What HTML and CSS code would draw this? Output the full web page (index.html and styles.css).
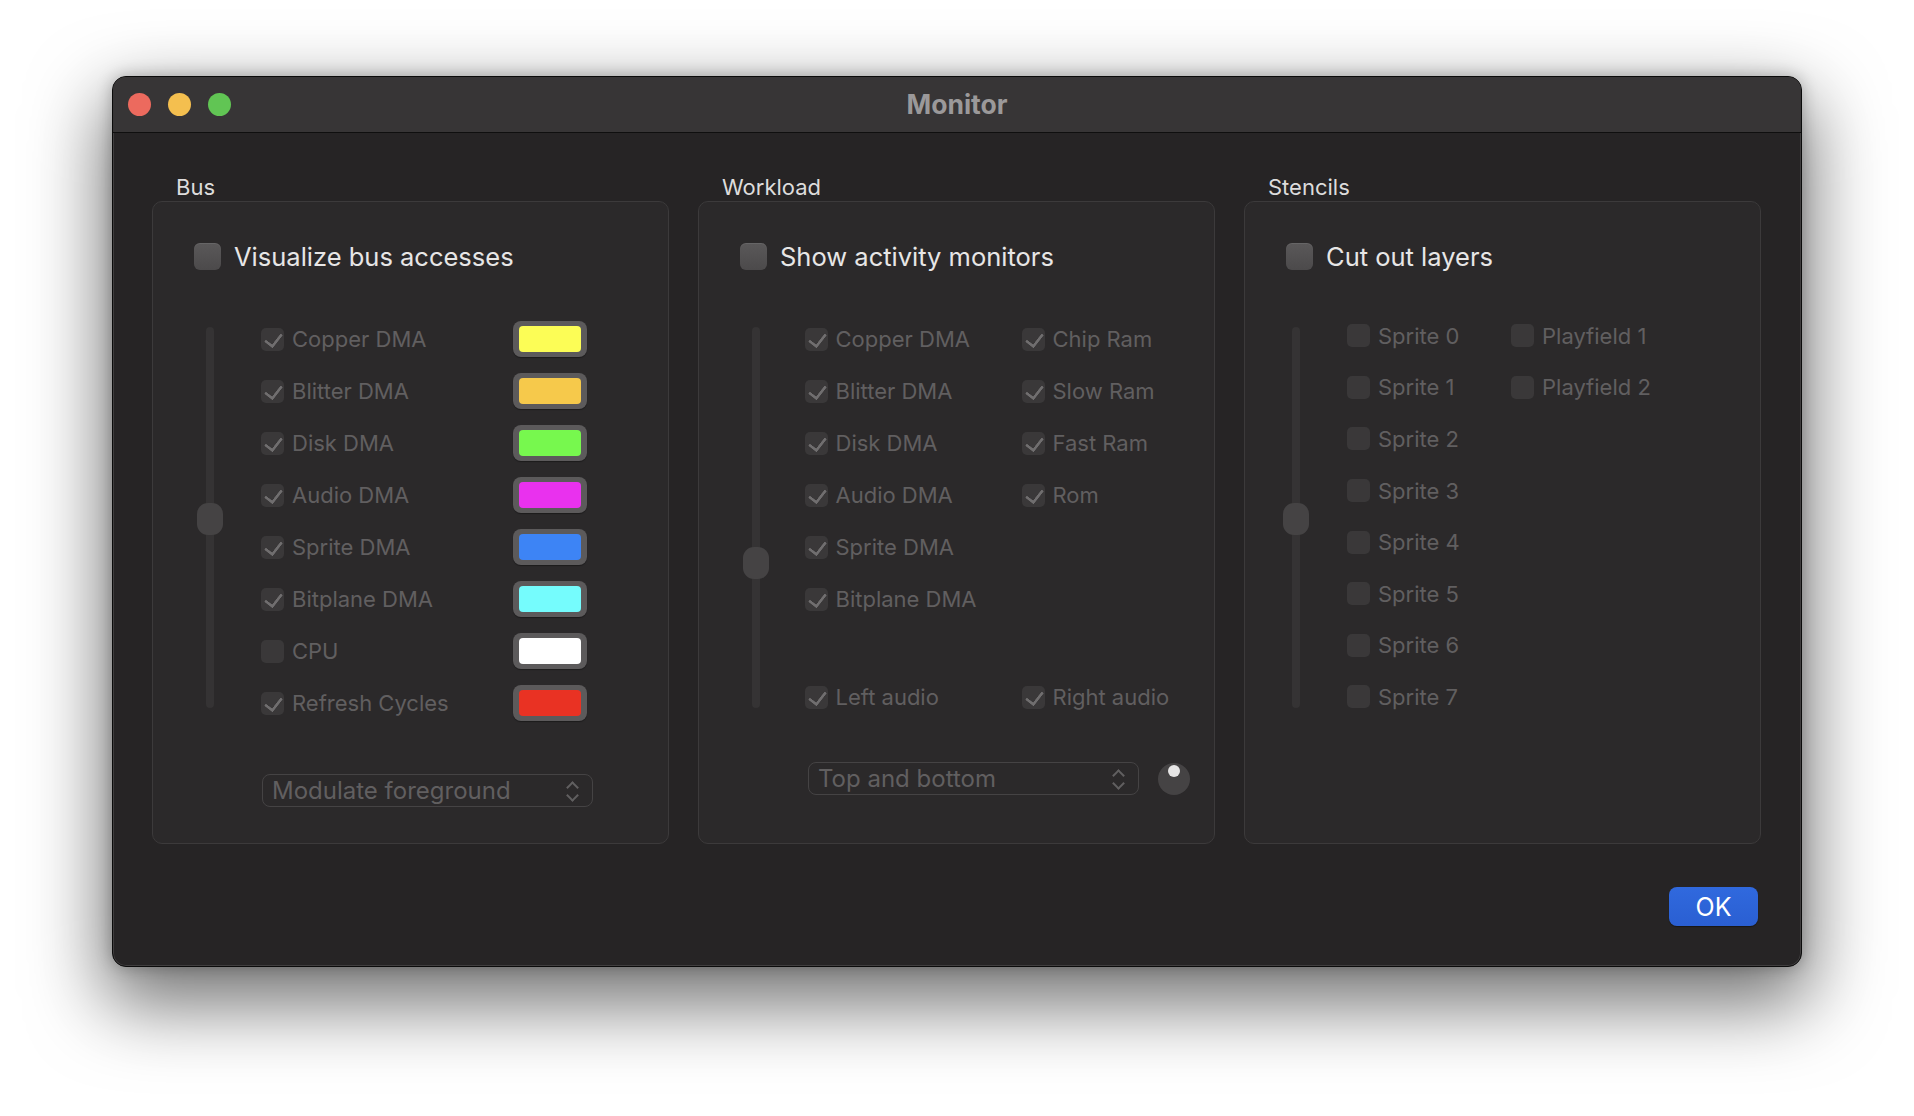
FILE: index.html
```html
<!DOCTYPE html>
<html>
<head>
<meta charset="utf-8">
<link rel="stylesheet" href="styles.css">
</head>
<body>
<div class="window">
  <div class="titlebar">
    <div class="lights">
      <span class="light red"></span>
      <span class="light yellow"></span>
      <span class="light green"></span>
    </div>
    <div class="title">Monitor</div>
  </div>
  <div class="content">
    <div class="groups">
      <!-- Bus -->
      <div class="group">
        <div class="glabel">Bus</div>
        <div class="box box-bus">
          <label class="main"><span class="mcb"></span><span>Visualize bus accesses</span></label>
          <div class="items">
            <div class="slider"><div class="knob knob-bus"></div></div>
            <div class="rows">
              <div class="row"><div class="item w-bus"><span class="cb on"></span>Copper DMA</div><span class="well"><i style="background:#fcfd56"></i></span></div>
              <div class="row"><div class="item w-bus"><span class="cb on"></span>Blitter DMA</div><span class="well"><i style="background:#f6c94b"></i></span></div>
              <div class="row"><div class="item w-bus"><span class="cb on"></span>Disk DMA</div><span class="well"><i style="background:#77f84e"></i></span></div>
              <div class="row"><div class="item w-bus"><span class="cb on"></span>Audio DMA</div><span class="well"><i style="background:#e931ee"></i></span></div>
              <div class="row"><div class="item w-bus"><span class="cb on"></span>Sprite DMA</div><span class="well"><i style="background:#3d84f5"></i></span></div>
              <div class="row"><div class="item w-bus"><span class="cb on"></span>Bitplane DMA</div><span class="well"><i style="background:#75fcfd"></i></span></div>
              <div class="row"><div class="item w-bus"><span class="cb"></span>CPU</div><span class="well"><i style="background:#ffffff"></i></span></div>
              <div class="row"><div class="item w-bus"><span class="cb on"></span>Refresh Cycles</div><span class="well"><i style="background:#e93223"></i></span></div>
            </div>
          </div>
          <div class="popup popup-bus"><span>Modulate foreground</span><span class="chev"></span></div>
        </div>
      </div>
      <!-- Workload -->
      <div class="group">
        <div class="glabel">Workload</div>
        <div class="box box-work">
          <label class="main"><span class="mcb"></span><span>Show activity monitors</span></label>
          <div class="items items-work">
            <div class="slider"><div class="knob knob-work"></div></div>
            <div class="rows">
              <div class="row"><div class="item w-work"><span class="cb on"></span>Copper DMA</div><div class="item"><span class="cb on"></span>Chip Ram</div></div>
              <div class="row"><div class="item w-work"><span class="cb on"></span>Blitter DMA</div><div class="item"><span class="cb on"></span>Slow Ram</div></div>
              <div class="row"><div class="item w-work"><span class="cb on"></span>Disk DMA</div><div class="item"><span class="cb on"></span>Fast Ram</div></div>
              <div class="row"><div class="item w-work"><span class="cb on"></span>Audio DMA</div><div class="item"><span class="cb on"></span>Rom</div></div>
              <div class="row"><div class="item w-work"><span class="cb on"></span>Sprite DMA</div></div>
              <div class="row"><div class="item w-work"><span class="cb on"></span>Bitplane DMA</div></div>
              <div class="spacer"></div>
              <div class="row"><div class="item w-work"><span class="cb on"></span>Left audio</div><div class="item"><span class="cb on"></span>Right audio</div></div>
            </div>
          </div>
          <div class="popup-line">
            <div class="popup popup-work"><span>Top and bottom</span><span class="chev"></span></div>
            <span class="dial"></span>
          </div>
        </div>
      </div>
      <!-- Stencils -->
      <div class="group">
        <div class="glabel">Stencils</div>
        <div class="box box-sten">
          <label class="main"><span class="mcb"></span><span>Cut out layers</span></label>
          <div class="items items-sten">
            <div class="slider"><div class="knob knob-sten"></div></div>
            <div class="rows">
              <div class="row srow"><div class="item w-sten"><span class="cb"></span>Sprite 0</div><div class="item"><span class="cb"></span>Playfield 1</div></div>
              <div class="row srow"><div class="item w-sten"><span class="cb"></span>Sprite 1</div><div class="item"><span class="cb"></span>Playfield 2</div></div>
              <div class="row srow"><div class="item w-sten"><span class="cb"></span>Sprite 2</div></div>
              <div class="row srow"><div class="item w-sten"><span class="cb"></span>Sprite 3</div></div>
              <div class="row srow"><div class="item w-sten"><span class="cb"></span>Sprite 4</div></div>
              <div class="row srow"><div class="item w-sten"><span class="cb"></span>Sprite 5</div></div>
              <div class="row srow"><div class="item w-sten"><span class="cb"></span>Sprite 6</div></div>
              <div class="row srow"><div class="item w-sten"><span class="cb"></span>Sprite 7</div></div>
            </div>
          </div>
        </div>
      </div>
    </div>
    <div class="footer">
      <button class="ok">OK</button>
    </div>
  </div>
</div>
</body>
</html>
```

FILE: styles.css
```css
* { box-sizing: border-box; }

html, body {
  margin: 0;
  background: #ffffff;
}

html { height: 100%; }

body {
  min-height: 1116px;
  padding: 76px 0 0 112px;
  font-family: Inter, "Noto Sans", "Liberation Sans", sans-serif;
  overflow: hidden;
}

.window {
  width: 1690px;
  height: 891px;
  border-radius: 14px;
  background: #262425;
  border: 1px solid #0b0b0b;
  box-shadow: 0 30px 75px 8px rgba(0,0,0,0.55), 0 0 16px rgba(0,0,0,0.25), inset 0 0 0 1px rgba(255,255,255,0.12);
  overflow: hidden;
}

.titlebar {
  height: 56px;
  background: #373536;
  border-bottom: 1px solid #0f0f0f;
  display: flex;
  align-items: center;
  position: relative;
}

.lights {
  display: flex;
  gap: 17px;
  padding-left: 15px;
}

.light {
  width: 23px;
  height: 23px;
  border-radius: 50%;
  display: block;
}
.red { background: #ec6a5e; }
.yellow { background: #f4bf4f; }
.green { background: #61c554; }

.title {
  position: absolute;
  left: 0;
  right: 0;
  text-align: center;
  font-weight: 700;
  font-size: 26.5px;
  color: #9b999a;
  top: 11px;
}

.content {
  padding: 39px 40px 0 39px;
}

.groups {
  display: flex;
  gap: 29px;
}

.group {
  flex: 1;
  display: flex;
  flex-direction: column;
}

.glabel {
  height: 29px;
  padding-top: 2px;
  line-height: 26px;
  font-size: 22px;
  color: #dddcdc;
  padding-left: 24px;
}

.box {
  height: 643px;
  background: #2b292a;
  border: 1.5px solid #3c3a3b;
  border-radius: 10px;
  padding: 40px 0 0 41px;
}

.main {
  display: flex;
  align-items: center;
  gap: 13px;
  height: 28px;
  font-size: 25.5px;
  color: #e7e6e6;
}

.mcb {
  width: 27px;
  height: 27px;
  border-radius: 6px;
  background: linear-gradient(#5a5859, #4c4a4b);
  box-shadow: inset 0 1px 0 rgba(255,255,255,0.08);
  flex: none;
}

.items {
  display: flex;
  align-items: flex-start;
  gap: 38px;
  margin-top: 43px;
  margin-left: 3px;
}

.items-work {
  gap: 35.5px;
}

.items-sten {
  margin-top: 40px;
  margin-left: -3px;
}

.slider {
  width: 26px;
  height: 381px;
  margin-top: 14px;
  position: relative;
  display: flex;
  justify-content: center;
  flex: none;
}

.slider::before {
  content: "";
  width: 8px;
  height: 100%;
  border-radius: 4px;
  background: #353334;
}

.items-sten .slider { margin-top: 17px; }

.knob {
  position: absolute;
  left: 0;
  width: 26px;
  height: 32px;
  border-radius: 11px;
  background: #454344;
}
.knob-bus { top: 176px; }
.knob-work { top: 220px; }
.knob-sten { top: 176px; }

.rows {
  display: flex;
  flex-direction: column;
}

.row {
  display: flex;
  align-items: center;
  height: 52px;
}

.srow { height: 51.6px; }

.spacer { height: 46px; }

.item {
  display: flex;
  align-items: center;
  gap: 8px;
  font-size: 22px;
  color: #615f60;
  white-space: nowrap;
}

.w-bus { width: 252px; }
.w-work { width: 217px; }
.w-sten { width: 164px; }

.cb {
  width: 23px;
  height: 23px;
  border-radius: 5px;
  background: #3a3839;
  flex: none;
  position: relative;
}

.cb.on::after {
  content: "";
  position: absolute;
  left: 7px;
  top: 2px;
  width: 8px;
  height: 14px;
  border: solid #706e6f;
  border-width: 0 3.5px 3.5px 0;
  transform: rotate(38deg);
  transform-origin: center;
  border-radius: 1px;
}

.well {
  width: 74px;
  height: 36px;
  border-radius: 8px;
  background: #5c5a5b;
  padding: 5px 6px;
  display: block;
  box-shadow: 0 1px 1px rgba(0,0,0,0.35);
}

.well i {
  display: block;
  width: 100%;
  height: 100%;
  border-radius: 4px;
}

.popup {
  height: 33px;
  width: 331px;
  border: 1.5px solid #454344;
  border-radius: 8px;
  display: flex;
  align-items: center;
  justify-content: space-between;
  padding: 0 14px 0 9px;
  font-size: 24px;
  color: #615f60;
}

.popup-bus {
  margin-top: 45px;
  margin-left: 68px;
}

.popup-line {
  display: flex;
  align-items: center;
  gap: 19px;
  margin-top: 39px;
  margin-left: 68px;
}

.chev {
  width: 12px;
  height: 22px;
  position: relative;
  flex: none;
}
.chev::before, .chev::after {
  content: "";
  position: absolute;
  left: 2px;
  width: 7px;
  height: 7px;
  border: solid #615f60;
  border-width: 2px 0 0 2px;
  transform: rotate(45deg);
}
.chev::before { top: 3px; }
.chev::after { top: 11px; transform: rotate(225deg); }

.dial {
  width: 32px;
  height: 32px;
  border-radius: 50%;
  background: #454344;
  position: relative;
  flex: none;
}
.dial::after {
  content: "";
  position: absolute;
  width: 12px;
  height: 12px;
  border-radius: 50%;
  background: #e6e5e5;
  left: 10px;
  top: 2px;
}

.footer {
  display: flex;
  justify-content: flex-end;
  padding-right: 3px;
  margin-top: 43px;
}

.ok {
  width: 89px;
  height: 39px;
  border: none;
  border-radius: 8px;
  background: linear-gradient(#3069de, #2a5fd2);
  color: #ffffff;
  font-family: Inter, "Noto Sans", sans-serif;
  font-size: 25px;
  box-shadow: 0 1px 1px rgba(0,0,0,0.4);
  padding: 0;
}
```
